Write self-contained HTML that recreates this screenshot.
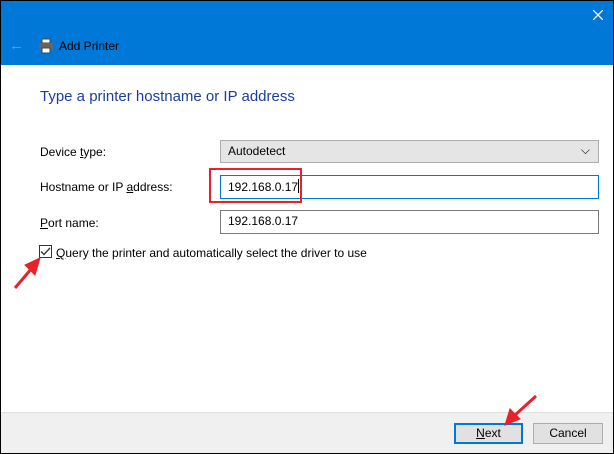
<!DOCTYPE html><html><head><style>
body{margin:0;width:614px;height:454px;overflow:hidden;font-family:"Liberation Sans",sans-serif;font-size:12px;color:#000}
.win{position:absolute;left:0;top:0;width:612px;height:452px;border:1px solid #000;background:#fff;overflow:hidden}
.top{position:absolute;left:0;top:0;width:612px;height:64px;background:#0078d7}
.t{position:absolute;white-space:nowrap}
.box{position:absolute;border:1px solid #7a7a7a;background:#fff;box-sizing:border-box;padding:3px 0 0 7px;font-size:12px}
.foot{position:absolute;left:0;top:411px;width:612px;height:41px;background:#f0f0f0;border-top:1px solid #dfdfdf}
.btn{position:absolute;height:21px;box-sizing:border-box;background:#e1e1e1;border:1px solid #adadad;text-align:center;line-height:19px}
</style></head><body><div class="win">
<div class="top"></div>
<svg style="position:absolute;left:592px;top:9px" width="10" height="10"><path d="M0 0L10 10M10 0L0 10" stroke="#fff" stroke-width="1.3"/></svg>
<div class="t" style="left:8px;top:36px;color:#6f9fd0;font-size:15px">←</div>
<svg style="position:absolute;left:37px;top:37px" width="16" height="16"><rect x="4" y="1" width="8" height="4" fill="#fff" stroke="#444"/><rect x="1" y="5" width="14" height="7" fill="#666"/><rect x="4" y="10" width="8" height="5" fill="#fff" stroke="#444"/></svg>
<div class="t" style="left:58px;top:38px;font-size:12px">Add Printer</div>
<div class="t" style="left:39px;top:87px;font-size:15px;color:#1c3d9c">Type a printer hostname or IP address</div>
<div class="t" style="left:39px;top:144px">Device <u>t</u>ype:</div>
<div class="t" style="left:39px;top:179px">Hostname or IP <u>a</u>ddress:</div>
<div class="t" style="left:39px;top:215px"><u>P</u>ort name:</div>
<div class="box" style="left:219px;top:139px;width:379px;height:23px;background:#e5e5e5;border-color:#adadad">Autodetect<span style="position:absolute;right:8px;top:2px">⌵</span></div>
<div class="box" style="left:219px;top:174px;width:379px;height:24px;border-color:#0078d7">192.168.0.17<span style="display:inline-block;width:1px;height:14px;background:#000;vertical-align:-2px"></span></div>
<div class="box" style="left:219px;top:209px;width:379px;height:24px">192.168.0.17</div>
<div style="position:absolute;left:208px;top:167px;width:93px;height:35px;border:2px solid #e8212b;box-sizing:border-box"></div>
<div style="position:absolute;left:38px;top:244px;width:13px;height:13px;border:1px solid #333;box-sizing:border-box"></div>
<svg style="position:absolute;left:38px;top:244px" width="13" height="13"><path d="M2 6.5L5 9.5L11 3" stroke="#333" stroke-width="1.3" fill="none"/></svg>
<div class="t" style="left:55px;top:245px"><u>Q</u>uery the printer and automatically select the driver to use</div>
<div class="foot"></div>
<div class="btn" style="left:453px;top:422px;width:69px;border:2px solid #0078d7;line-height:17px"><u>N</u>ext</div>
<div class="btn" style="left:532px;top:422px;width:70px">Cancel</div>
<svg style="position:absolute;left:0;top:0" width="614" height="454"><g stroke="#e8212b" stroke-width="3" fill="#e8212b"><line x1="14" y1="287" x2="31" y2="267"/><polygon points="39,257 24,264 34,274" stroke-width="1"/><line x1="535" y1="395" x2="513" y2="415"/><polygon points="504,424 509,408 519,418" stroke-width="1"/></g></svg>
</div></body></html>
